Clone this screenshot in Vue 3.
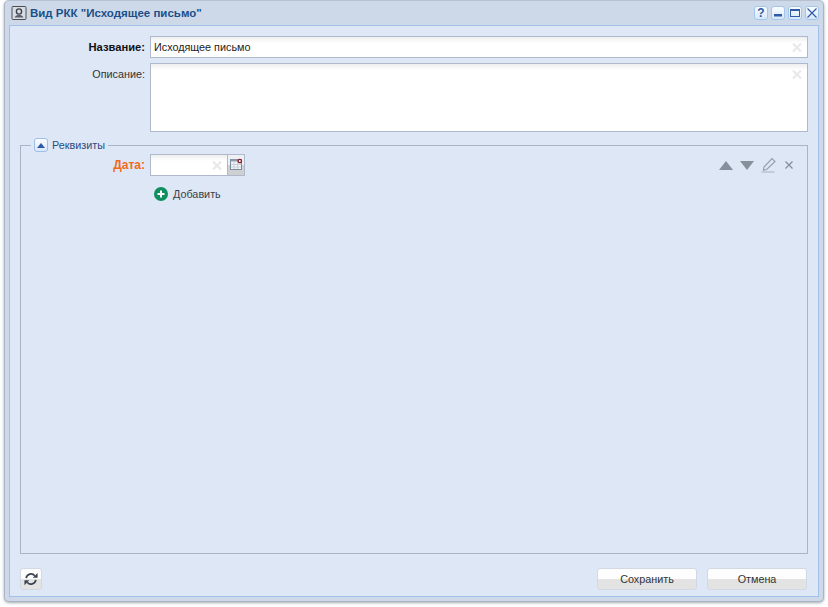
<template>
  <div class="page">
    <div class="window">
      <header class="titlebar">
        <div class="title">
          <svg class="app-icon" width="16" height="16" viewBox="0 0 16 16">
            <rect x="1" y="1.500" width="14" height="13" rx="1" fill="#d8dde4" stroke="#4a4f57" />
            <circle cx="8" cy="6.500" r="2.600" fill="none" stroke="#3d424a" stroke-width="1.400" />
            <path d="M3.500 12.500c1-2 2.600-2.500 4.500-2.500s3.500.5 4.500 2.500z" fill="#5a6069" />
          </svg>
          <span>Вид РКК "Исходящее письмо"</span>
        </div>
        <div class="tools">
          <button class="tool"><span class="q">?</span></button>
          <button class="tool"><svg width="10" height="10" viewBox="0 0 10 10"><rect x="1" y="6" width="8" height="2.500" fill="#2f5aa8" /></svg></button>
          <button class="tool"><svg width="10" height="10" viewBox="0 0 10 10"><rect x=".5" y="1.500" width="9" height="7" fill="none" stroke="#2f5aa8" /><rect x="0" y="1" width="10" height="2" fill="#2f5aa8" /></svg></button>
          <button class="tool"><svg width="10" height="10" viewBox="0 0 10 10"><path d="M.5.500l9 9M9.500.500l-9 9" stroke="#2f5aa8" stroke-width="1.200" /></svg></button>
        </div>
      </header>
      <main class="body">
        <div class="form">
          <div class="row">
            <label class="label strong">Название:</label>
            <div class="input text-input">Исходящее письмо
              <svg class="clear" width="10" height="9" viewBox="0 0 10 9"><path d="M1 .5l8 8M9 .5l-8 8" stroke="#e9e9e9" stroke-width="2.200" /></svg>
            </div>
          </div>
          <div class="row">
            <label class="label">Описание:</label>
            <div class="input area">
              <svg class="clear" width="10" height="9" viewBox="0 0 10 9"><path d="M1 .5l8 8M9 .5l-8 8" stroke="#e9e9e9" stroke-width="2.200" /></svg>
            </div>
          </div>
        </div>
        <section class="fieldset">
          <div class="legend">
            <button class="collapse"><svg width="8" height="5" viewBox="0 0 8 5"><path d="M4 0l4 5H0z" fill="#2f5aa8" /></svg></button>
            <span>Реквизиты</span>
          </div>
          <div class="date-row">
            <label class="label required">Дата:</label>
            <div class="date">
              <div class="input date-input">
                <svg class="clear" width="10" height="9" viewBox="0 0 10 9"><path d="M1 .5l8 8M9 .5l-8 8" stroke="#e9e9e9" stroke-width="2.200" /></svg>
              </div>
              <div class="trigger">
                <svg width="13" height="12" viewBox="0 0 13 12">
                  <rect x=".5" y="1.500" width="11" height="10" fill="#f2f4f8" stroke="#7d8c9e" />
                  <rect x=".5" y="1.500" width="11" height="2" fill="#8d9cae" />
                  <path d="M1 6.500h10M1 9h10M4 4v7M7.500 4v7" stroke="#c8d0da" />
                  <circle cx="9.800" cy="3" r="1.700" fill="#fff" stroke="#8b1a2b" stroke-width="1.300" />
                </svg>
              </div>
            </div>
            <div class="row-actions">
              <svg width="14" height="9" viewBox="0 0 14 9"><path d="M7 0l7 9H0z" fill="#868f9c" /></svg>
              <svg width="14" height="9" viewBox="0 0 14 9"><path d="M0 0h14L7 9z" fill="#868f9c" /></svg>
              <svg width="16" height="16" viewBox="0 0 16 16"><path d="M3 10L11 1.500l3 3-8.300 8-3.200.7z" fill="none" stroke="#98a0ac" stroke-width="1.200" /><path d="M.5 15h13" stroke="#a7aeb9" /></svg>
              <svg width="10" height="10" viewBox="0 0 10 10"><path d="M1.500 1.500l7 7M8.500 1.500l-7 7" stroke="#868f9c" stroke-width="1.300" /></svg>
            </div>
          </div>
          <div class="add">
            <svg width="14" height="14" viewBox="0 0 14 14"><circle cx="7" cy="7" r="7" fill="#0f8f5f" /><path d="M7 3.500v7M3.500 7h7" stroke="#fff" stroke-width="2" /></svg>
            <span>Добавить</span>
          </div>
        </section>
        <footer class="footer">
          <button class="btn icon-btn">
            <svg width="14" height="14" viewBox="0 0 16 16">
              <path d="M2.500 7A5.500 5.500 0 0 1 12.300 4.300" fill="none" stroke="#3c4350" stroke-width="1.900" />
              <path d="M10 6.500h5.500V1z" fill="#3c4350" />
              <path d="M13.500 9A5.500 5.500 0 0 1 3.700 11.700" fill="none" stroke="#3c4350" stroke-width="1.900" />
              <path d="M6 9.500H.5V15z" fill="#3c4350" />
            </svg>
          </button>
          <div class="actions">
            <button class="btn wide">Сохранить</button>
            <button class="btn wide">Отмена</button>
          </div>
        </footer>
      </main>
    </div>
  </div>
</template>

<script setup>
</script>

<style>
html, body { margin: 0; background: #fff; }
</style>

<style scoped>
.page {
  width: 828px;
  height: 607px;
  box-sizing: border-box;
  padding: 0 4px 4px 4px;
  font: 10.8px "Liberation Sans", sans-serif;
  overflow: hidden;
}
.window {
  height: 602px;
  box-sizing: border-box;
  background: #cdd9e8;
  border: 1px solid #aab4c2;
  border-top-color: #b6c2d2;
  border-radius: 5px;
  padding: 0 4px 4px 4px;
  display: flex;
  flex-direction: column;
  box-shadow: 0 1px 3px rgba(90, 100, 115, .55);
}
.titlebar {
  height: 24px;
  flex: none;
  display: flex;
  align-items: center;
  justify-content: space-between;
}
.title {
  display: flex;
  align-items: center;
  gap: 3px;
  margin-left: 2px;
  color: #1c4f8a;
  font-weight: 700;
  font-size: 11.5px;
}
.app-icon { display: block; }
.tools {
  display: flex;
  gap: 3px;
}
.tool {
  width: 14px;
  height: 14px;
  padding: 0;
  border: 1px solid #a3c6ef;
  border-radius: 3px;
  background: linear-gradient(#fafdff, #d6e7fa);
  display: flex;
  align-items: center;
  justify-content: center;
}
.q {
  color: #2f5aa8;
  font: 700 12px/12px "Liberation Sans", sans-serif;
}
.body {
  flex: 1;
  min-height: 0;
  background: #dee7f6;
  border: 1px solid #a3c0e8;
  display: flex;
  flex-direction: column;
  padding: 10px 10px 0 10px;
}
.form {
  display: flex;
  flex-direction: column;
  gap: 5px;
}
.row {
  display: flex;
  gap: 5px;
}
.label {
  width: 125px;
  text-align: right;
  color: #333;
  line-height: 22px;
  flex: none;
}
.strong {
  color: #111;
  font-weight: 700;
  font-size: 11.2px;
}
.required {
  width: 124px;
  color: #f26a1b;
  font-weight: 700;
  font-size: 12px;
}
.input {
  position: relative;
  box-sizing: border-box;
  background: linear-gradient(#eeeeee, #fff 6px);
  border: 1px solid #b0b9cc;
  color: #222;
}
.text-input {
  flex: 1;
  height: 22px;
  line-height: 20px;
  padding-left: 3px;
}
.area {
  flex: 1;
  height: 69px;
}
.clear {
  position: absolute;
  right: 5px;
  top: 6px;
}
.fieldset {
  position: relative;
  flex: 1;
  margin-top: 13px;
  border: 1px solid #a9b4c7;
  padding: 8px 0 0 0;
}
.legend {
  position: absolute;
  top: -8px;
  left: 10px;
  padding: 0 3px;
  background: #dee7f6;
  display: flex;
  align-items: center;
  gap: 4px;
  color: #2a4d80;
  line-height: 14px;
}
.collapse {
  width: 14px;
  height: 14px;
  padding: 0;
  border: 1px solid #9dbfe9;
  border-radius: 3px;
  background: linear-gradient(#fbfdff, #d9e7f8);
  display: flex;
  align-items: center;
  justify-content: center;
}
.date-row {
  display: flex;
  gap: 5px;
  height: 22px;
}
.date {
  display: flex;
}
.date-input {
  width: 78px;
  height: 22px;
}
.trigger {
  width: 17px;
  height: 22px;
  box-sizing: border-box;
  background: linear-gradient(#eef0f3 50%, #cfd0d2 50%);
  border: 1px solid #b0b9cc;
  border-left: 0;
  display: flex;
  justify-content: center;
  padding-top: 3px;
}
.row-actions {
  margin-left: auto;
  margin-right: 13px;
  display: flex;
  align-items: center;
  gap: 7px;
}
.add {
  margin: 11px 0 0 133px;
  display: flex;
  align-items: center;
  gap: 5px;
  color: #3a3f47;
  height: 14px;
}
.footer {
  flex: none;
  height: 42px;
  display: flex;
  justify-content: space-between;
  align-items: flex-end;
  padding: 0 1px 6px 0;
  box-sizing: border-box;
}
.actions {
  display: flex;
  gap: 10px;
}
.btn {
  height: 22px;
  padding: 0;
  border: 1px solid #d3d9e2;
  border-radius: 3px;
  background: linear-gradient(#fdfdfd 50%, #e3e3e3 50%);
  color: #333;
  font: inherit;
}
.wide {
  width: 100px;
}
.icon-btn {
  width: 22px;
  display: flex;
  align-items: center;
  justify-content: center;
}
</style>
